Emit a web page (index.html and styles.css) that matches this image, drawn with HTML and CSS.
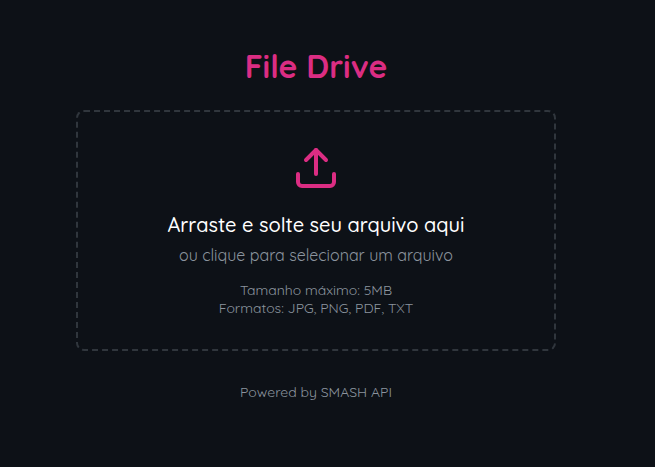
FILE: index.html
```
<!DOCTYPE html>
<html lang="pt-BR">
<head>
  <meta charset="UTF-8">
  <meta name="viewport" content="width=device-width, initial-scale=1.0">
  <title>File Drive</title>
  <link rel="stylesheet" href="styles.css">
</head>
<body>
  <main class="container">
    <h1 class="title">File Drive</h1>

    <button type="button" class="upload-area">
      <svg class="upload-icon" viewBox="0 0 24 24" aria-hidden="true">
        <path d="M21 15v4a2 2 0 0 1-2 2H5a2 2 0 0 1-2-2v-4"/>
        <path d="M17 8l-5-5-5 5"/>
        <path d="M12 3v12"/>
      </svg>
      <span class="upload-text">Arraste e solte seu arquivo aqui</span>
      <span class="upload-hint">ou clique para selecionar um arquivo</span>
      <span class="upload-info">Tamanho máximo: 5MB<br>Formatos: JPG, PNG, PDF, TXT</span>
    </button>

    <footer class="footer">Powered by SMASH API</footer>
  </main>
</body>
</html>
```

FILE: styles.css
```
* {
  box-sizing: border-box;
}

body {
  margin: 0;
  padding: 46px 99px 0 76px;
  background-color: #0d1117;
  color: #ffffff;
  font-family: Quicksand, Lato, sans-serif;
}

.container {
  max-width: 480px;
  margin: 0 auto;
  text-align: center;
}

.title {
  margin: 0 0 24px;
  color: #db2d83;
  font-size: 32px;
  line-height: 40px;
  font-weight: 700;
}

.upload-area {
  display: flex;
  flex-direction: column;
  align-items: center;
  width: 100%;
  padding: 32px;
  border: 2px dashed #30363d;
  border-radius: 8px;
  background: none;
  color: inherit;
  font-family: inherit;
  cursor: pointer;
}

.upload-icon {
  width: 48px;
  height: 48px;
  margin-bottom: 20px;
  fill: none;
  stroke: #db2d83;
  stroke-width: 2;
  stroke-linecap: round;
  stroke-linejoin: round;
}

.upload-text {
  font-size: 20px;
  line-height: 26px;
  font-weight: 500;
}

.upload-hint {
  margin: 7px 0 16px;
  color: #8b949e;
  font-size: 16px;
  line-height: 20px;
}

.upload-info {
  color: #8b949e;
  font-size: 14px;
  line-height: 18px;
}

.footer {
  margin-top: 32px;
  color: #8b949e;
  font-size: 14px;
  line-height: 18px;
}
```
